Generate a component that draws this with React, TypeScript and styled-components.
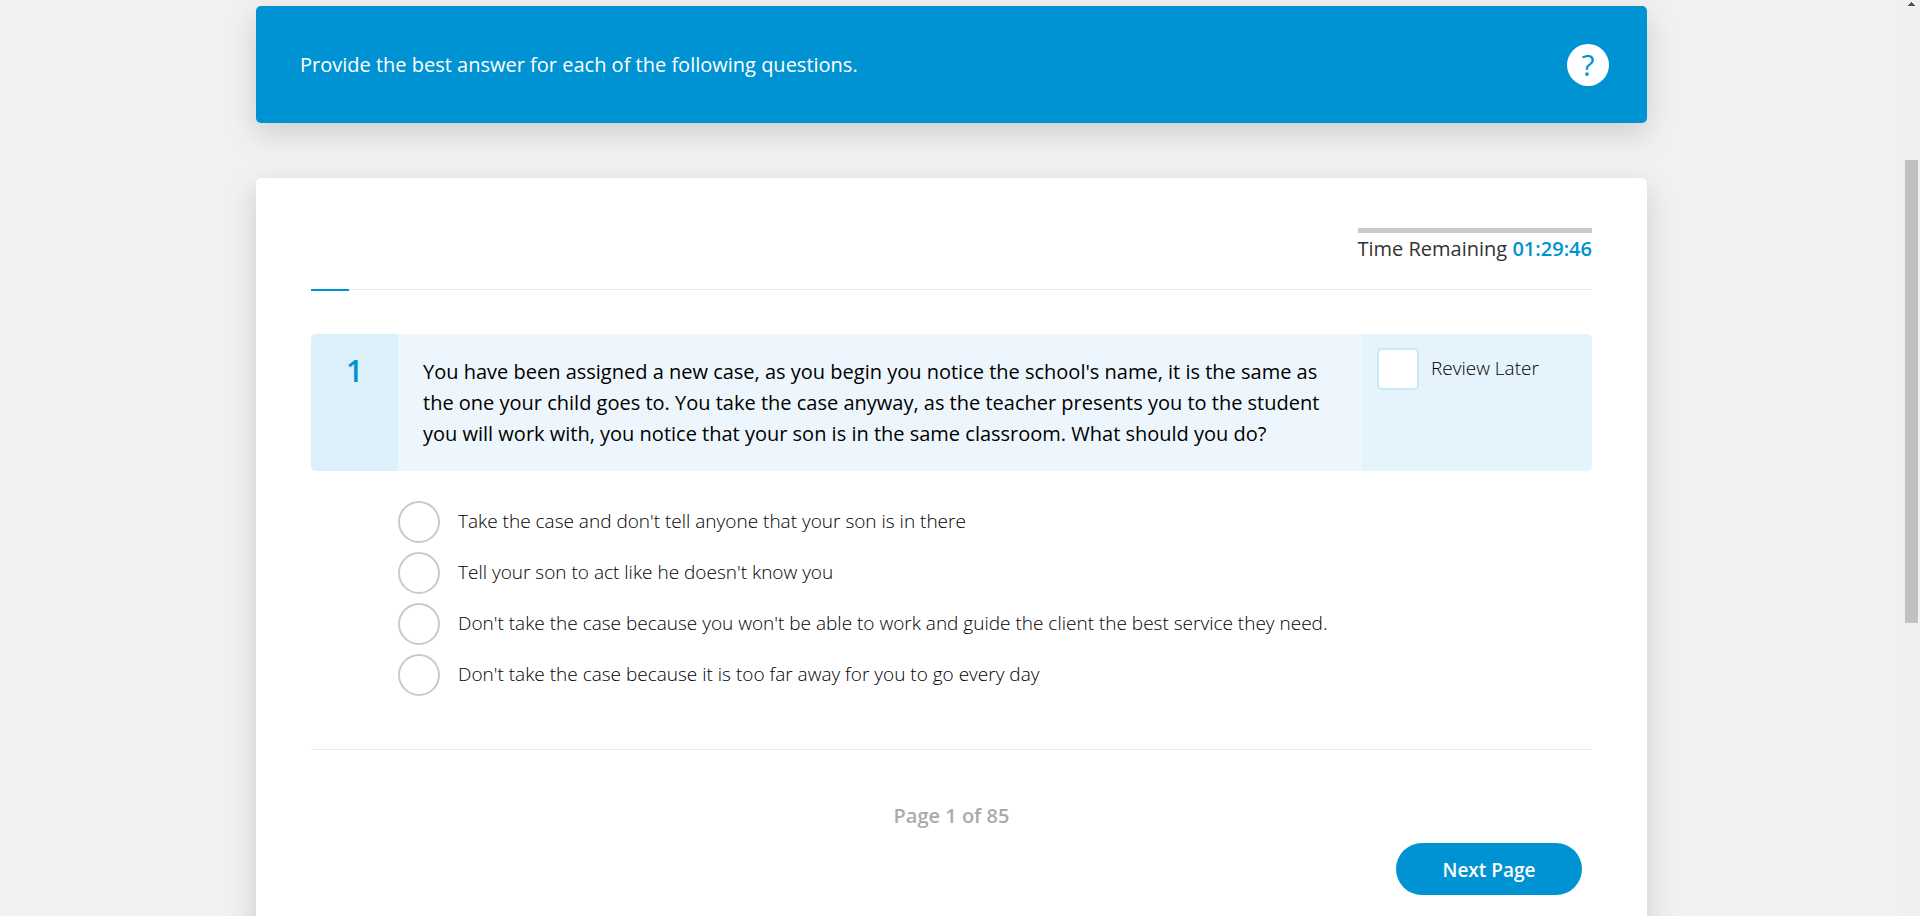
import React, { useState } from "react";
import styled, { createGlobalStyle } from "styled-components";

const blue = "#0093d3";

const GlobalStyle = createGlobalStyle`
  *, *::before, *::after { box-sizing: border-box; }
  body {
    margin: 0;
    background: #f1f1f1;
    color: #333;
    font-family: "Open Sans", "Noto Sans", sans-serif;
    font-size: 20px;
    line-height: 31px;
  }
`;

const Shell = styled.div`
  display: flex;
  height: 100vh;
  overflow: hidden;
`;

const Page = styled.div`
  flex: 1;
  min-width: 0;
  display: flex;
  flex-direction: column;
  gap: 55px;
  padding: 6px clamp(16px, 13.35vw, 256px) 0;
`;

const Banner = styled.header`
  display: flex;
  align-items: center;
  justify-content: space-between;
  gap: 24px;
  min-height: 117px;
  padding: 0 38px 0 44px;
  border-radius: 5px;
  background: ${blue};
  color: #fff;
  box-shadow: 0 10px 30px rgba(0, 0, 0, 0.15);
`;

const BannerText = styled.p`
  margin: 0;
`;

const HelpButton = styled.button`
  flex: none;
  width: 42px;
  height: 42px;
  padding: 0;
  border: 0;
  border-radius: 50%;
  background: #fff;
  color: ${blue};
  font: inherit;
  font-size: 30px;
  line-height: 42px;
  cursor: pointer;
`;

const Card = styled.main`
  flex: 1 0 auto;
  padding: 50px 55px;
  border-radius: 5px 5px 0 0;
  background: #fff;
  box-shadow: 0 10px 30px rgba(0, 0, 0, 0.15);
`;

const Timer = styled.div`
  width: fit-content;
  margin: 0 0 25px auto;
  border-top: 5px solid #cacaca;
`;

const TimeLeft = styled.span`
  color: ${blue};
  font-weight: 600;
`;

const Progress = styled.div`
  height: 1px;
  margin-bottom: 44px;
  background: #ebebeb;
`;

const ProgressBar = styled.div`
  height: 2px;
  background: ${blue};
`;

const Question = styled.section`
  display: flex;
  border-radius: 5px;
  overflow: hidden;
  background: #edf6fc;
`;

const QuestionNumber = styled.div`
  flex: none;
  width: 87px;
  padding-top: 17px;
  background: #dbf0f8;
  color: ${blue};
  font-size: 30px;
  font-weight: 600;
  line-height: 40px;
  text-align: center;
`;

const QuestionText = styled.p`
  flex: 1;
  margin: 0;
  padding: 22px 25px;
  color: #000;
`;

const Review = styled.label`
  flex: none;
  display: flex;
  align-items: flex-start;
  gap: 12px;
  width: 230px;
  padding: 14px 15px;
  background: #e5f4fc;
  color: #000;
  font-size: 19px;
  font-weight: 300;
  line-height: 40px;
  cursor: pointer;
`;

const ReviewBox = styled.input`
  appearance: none;
  flex: none;
  width: 42px;
  height: 42px;
  margin: 0;
  border: 2px solid #c9e9f5;
  border-radius: 5px;
  background: #fff;

  &:checked {
    box-shadow: inset 0 0 0 8px #fff;
    background: ${blue};
  }
`;

const Options = styled.fieldset`
  display: flex;
  flex-direction: column;
  align-items: flex-start;
  gap: 9px;
  margin: 30px 0 53px 87px;
  padding: 0;
  border: 0;
`;

const Option = styled.label`
  display: flex;
  align-items: flex-start;
  gap: 18px;
  color: #000;
  font-size: 19px;
  font-weight: 300;
  line-height: 40px;
  cursor: pointer;
`;

const Radio = styled.input`
  appearance: none;
  flex: none;
  width: 42px;
  height: 42px;
  margin: 0;
  border: 2px solid #cacaca;
  border-radius: 50%;
  background: #fff;

  &:checked {
    box-shadow: inset 0 0 0 8px #fff;
    background: ${blue};
  }
`;

const Footer = styled.footer`
  display: flex;
  flex-direction: column;
  gap: 12px;
  padding-top: 50px;
  border-top: 1px solid #ebebeb;
`;

const PageCount = styled.div`
  color: #aaa;
  font-weight: 600;
  text-align: center;
`;

const NextButton = styled.button`
  align-self: flex-end;
  min-width: 186px;
  height: 52px;
  margin-right: 10px;
  padding: 2px 24px 0;
  border: 0;
  border-radius: 26px;
  background: ${blue};
  color: #fff;
  font: inherit;
  font-size: 19px;
  font-weight: 600;
  cursor: pointer;
`;

const ScrollTrack = styled.div`
  flex: none;
  display: flex;
  flex-direction: column;
  align-items: center;
  width: 17px;
  height: 100vh;
  padding-top: 2px;
  background: #f0f0f0;
`;

const ScrollArrow = styled.svg`
  flex: none;
  display: block;
  width: 7px;
  height: 4px;
  fill: #505050;
`;

const ScrollThumb = styled.div`
  width: 13px;
  height: 463px;
  margin-top: 154px;
  background: #c1c1c1;
`;

const answers = [
  "Take the case and don't tell anyone that your son is in there",
  "Tell your son to act like he doesn't know you",
  "Don't take the case because you won't be able to work and guide the client the best service they need.",
  "Don't take the case because it is too far away for you to go every day",
];

export default function App() {
  const [picked, setPicked] = useState<number | null>(null);
  const [review, setReview] = useState(false);
  const progress = 3;

  return (
    <Shell>
      <GlobalStyle />
      <Page>
        <Banner>
          <BannerText>Provide the best answer for each of the following questions.</BannerText>
          <HelpButton type="button">?</HelpButton>
        </Banner>
        <Card>
          <Timer>
            Time Remaining <TimeLeft>01:29:46</TimeLeft>
          </Timer>
          <Progress>
            <ProgressBar style={{ width: `${progress}%` }} />
          </Progress>
          <Question>
            <QuestionNumber>1</QuestionNumber>
            <QuestionText id="question">
              You have been assigned a new case, as you begin you notice the school's name, it is the
              same as the one your child goes to. You take the case anyway, as the teacher presents
              you to the student you will work with, you notice that your son is in the same
              classroom. What should you do?
            </QuestionText>
            <Review>
              <ReviewBox
                type="checkbox"
                checked={review}
                onChange={(e) => setReview(e.target.checked)}
              />
              Review Later
            </Review>
          </Question>
          <Options aria-labelledby="question">
            {answers.map((text, i) => (
              <Option key={text}>
                <Radio
                  type="radio"
                  name="answer"
                  checked={picked === i}
                  onChange={() => setPicked(i)}
                />
                {text}
              </Option>
            ))}
          </Options>
          <Footer>
            <PageCount>Page 1 of 85</PageCount>
            <NextButton type="button">Next Page</NextButton>
          </Footer>
        </Card>
      </Page>
      <ScrollTrack aria-hidden="true">
        <ScrollArrow viewBox="0 0 7 4" shapeRendering="crispEdges">
          <path d="M3 0h1v1h1v1h1v1h1v1H0V3h1V2h1V1h1z" />
        </ScrollArrow>
        <ScrollThumb />
      </ScrollTrack>
    </Shell>
  );
}
